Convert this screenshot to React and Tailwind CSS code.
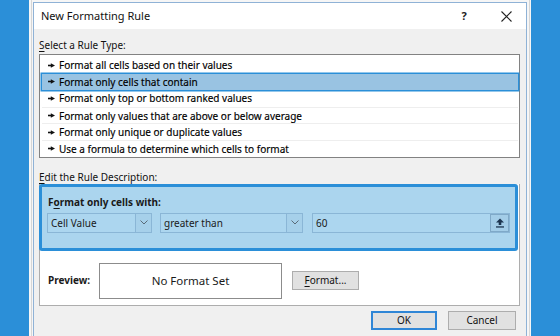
import React from "react";

const Bullet = () => (
  <svg width="7" height="5" viewBox="0 0 7 5" className="shrink-0">
    <rect x="0" y="1.7" width="3.4" height="1.6" fill="#111" />
    <polygon points="2.8,0.2 7,2.5 2.8,4.8" fill="#111" />
  </svg>
);

const Chevron = () => (
  <svg width="8" height="5" viewBox="0 0 8 5">
    <polyline points="0.5,0.5 4,4 7.5,0.5" fill="none" stroke="#5a6b78" strokeWidth="1" />
  </svg>
);

const Row = ({ children, selected, sep }) => (
  <div
    className={
      "mx-[1.5px] h-[16.6px] flex items-center gap-[4px] pl-[6.5px] " +
      (selected ? "bg-[#99c3e2] shadow-[0_0_0_1.5px_#2b8fd8] " : "") +
      (sep ? "border-t border-[#eeeeee] " : "")
    }
  >
    <Bullet />
    <span className="text-[10px] leading-none text-black whitespace-nowrap [-webkit-text-stroke:0.15px_#000]">{children}</span>
  </div>
);

const Strip = () => (
  <div className="w-[4px] flex justify-center bg-[#f6f6f6]">
    <div className="w-px bg-[#d6d6d6]" />
  </div>
);

export default function App() {
  return (
    <div className="flex h-[336px] w-[560px] overflow-hidden bg-[#f6f6f6] font-['Noto_Sans',sans-serif]">
      <div className="w-[29px] bg-[#2b8fd8]" />
      <Strip />
      <div className="w-[494px] flex flex-col pt-[2px]">
        <div className="flex-1 flex flex-col border-x border-t border-[#8fb2d6] bg-[#f0f0f0]">
          {/* title bar */}
          <div className="h-[26px] bg-white flex items-center pl-[7px] pr-[5px]">
            <span className="flex-1 text-[11px] text-[#111]">New Formatting Rule</span>
            <span className="w-[30px] text-center text-[11px] font-bold text-[#222]">?</span>
            <span className="w-[12px]" />
            <span className="w-[30px] flex justify-center">
              <svg width="11" height="11" viewBox="0 0 11 11">
                <path d="M0.5 0.5 L10.5 10.5 M10.5 0.5 L0.5 10.5" stroke="#222" strokeWidth="1.1" />
              </svg>
            </span>
          </div>
          {/* body */}
          <div className="flex flex-col pl-[5px] pr-[6px]">
            <div className="pt-[9px] h-[23px] text-[10px] leading-[14px] text-[#111]">
              <span className="underline underline-offset-2">S</span>elect a Rule Type:
            </div>
            <div className="mt-[2px] border border-[#828282] bg-white pt-[2px]">
              <Row>Format all cells based on their values</Row>
              <Row selected>Format only cells that contain</Row>
              <Row>Format only top or bottom ranked values</Row>
              <Row sep>Format only values that are above or below average</Row>
              <Row sep>Format only unique or duplicate values</Row>
              <Row sep>Use a formula to determine which cells to format</Row>
            </div>
            <div className="mt-[13px] h-[13px] text-[10px] leading-[13px] text-[#111]">
              <span className="underline underline-offset-2">E</span>dit the Rule Description:
            </div>
            {/* group box */}
            <div className="border border-[#adadad] border-t-0 bg-white pb-[6px]">
              <div className="-ml-px mr-[1px] rounded-[3px] border-[3px] border-[#2b8fd8] bg-[#abd5ee] pl-[5px] pr-[5px] pt-[8px] pb-[15px]">
                <div className="ml-[1px] h-[14px] text-[10px] leading-[14px] font-bold text-[#1a1a1a]">
                  F<span className="underline underline-offset-2">o</span>rmat only cells with:
                </div>
                <div className="mt-[4px] flex h-[20px]">
                  <div className="w-[105px] flex border border-[#8ab6d6] bg-[#acd6ef]">
                    <span className="flex-1 pl-[3px] text-[10px] leading-[18px] text-[#1a1a1a]">Cell Value</span>
                    <span className="w-[16px] flex items-center justify-center border-l border-[#8ab6d6] bg-[#a6d0ea]">
                      <Chevron />
                    </span>
                  </div>
                  <div className="ml-[8px] w-[143px] flex border border-[#8ab6d6] bg-[#acd6ef]">
                    <span className="flex-1 pl-[3px] text-[10px] leading-[18px] text-[#1a1a1a]">greater than</span>
                    <span className="w-[16px] flex items-center justify-center border-l border-[#8ab6d6] bg-[#a6d0ea]">
                      <Chevron />
                    </span>
                  </div>
                  <div className="ml-[9px] w-[198px] flex border border-[#8ab6d6] bg-[#acd6ef]">
                    <span className="flex-1 pl-[3px] text-[10px] leading-[18px] text-[#1a1a1a]">60</span>
                    <span className="w-[19px] flex items-center justify-center border border-[#7fa9c8] bg-[#a3cde8]">
                      <svg width="10" height="10" viewBox="0 0 10 10">
                        <polygon points="5,0.5 9,4.5 6.3,4.5 6.3,7 3.7,7 3.7,4.5 1,4.5" fill="#1d3550" />
                        <rect x="1" y="8.3" width="8" height="1.3" fill="#1d3550" />
                      </svg>
                    </span>
                  </div>
                </div>
              </div>
              {/* preview row */}
              <div className="mt-[12px] flex items-center pl-[8px]">
                <span className="w-[51px] text-[10px] font-bold text-[#1a1a1a]">Preview:</span>
                <div className="w-[183px] h-[36px] border border-[#8c8c8c] flex items-center justify-center text-[11.5px] text-[#1a1a1a]">
                  No Format Set
                </div>
                <div className="ml-[10px] w-[67px] h-[19px] border border-[#adadad] bg-[#e1e1e1] flex items-center justify-center text-[10px] text-[#111]">
                  <span className="underline underline-offset-2">F</span>ormat...
                </div>
              </div>
            </div>
            {/* buttons */}
            <div className="mt-[5px] flex justify-end pr-[4px]">
              <div className="w-[66px] h-[19px] border-2 border-[#2f86d6] bg-[#e1e1e1] flex items-center justify-center text-[10px] text-[#111]">
                OK
              </div>
              <div className="ml-[11px] w-[68px] h-[19px] border border-[#adadad] bg-[#e1e1e1] flex items-center justify-center text-[10px] text-[#111]">
                Cancel
              </div>
            </div>
          </div>
        </div>
      </div>
      <Strip />
      <div className="flex-1 bg-[#2b8fd8]" />
    </div>
  );
}
